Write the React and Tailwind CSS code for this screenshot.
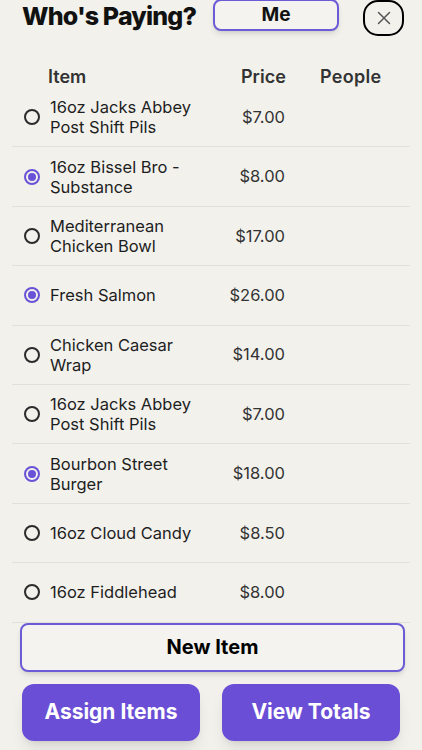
import { useState } from "react";

const items = [
  { name: ["16oz Jacks Abbey", "Post Shift Pils"], price: "$7.00", on: false },
  { name: ["16oz Bissel Bro -", "Substance"], price: "$8.00", on: true },
  { name: ["Mediterranean", "Chicken Bowl"], price: "$17.00", on: false },
  { name: ["Fresh Salmon"], price: "$26.00", on: true },
  { name: ["Chicken Caesar", "Wrap"], price: "$14.00", on: false },
  { name: ["16oz Jacks Abbey", "Post Shift Pils"], price: "$7.00", on: false },
  { name: ["Bourbon Street", "Burger"], price: "$18.00", on: true },
  { name: ["16oz Cloud Candy"], price: "$8.50", on: false },
  { name: ["16oz Fiddlehead"], price: "$8.00", on: false }
];

function Radio({ on }) {
  return (
    <div
      className={`w-4 h-4 rounded-full border-2 flex items-center justify-center shrink-0 ${
        on ? "border-[#6a52d8]" : "border-[#2b2b2b]"
      }`}
    >
      {on && <div className="w-2 h-2 rounded-full bg-[#6a52d8]" />}
    </div>
  );
}

export default function App() {
  const [rows, setRows] = useState(items);

  return (
    <div className="w-[422px] h-[750px] bg-[#f2f1ec] overflow-hidden font-['Inter',sans-serif] text-[#2b2b2b]">
      {/* top bar */}
      <div className="flex items-start h-[40px]">
        <div className="pl-[22px] w-[213px] text-[25px] leading-[32px] font-extrabold tracking-[-0.8px] text-[#111]">
          Who's Paying?
        </div>
        <button className="w-[126px] h-[32px] border-2 border-[#6b5bd6] rounded-lg bg-[#f4f3ef] shadow-md text-[19px] font-bold text-[#111] -mt-[1px]">
          Me
        </button>
        <button className="ml-[24px] w-[41px] h-[36px] border-2 border-black rounded-[15px] flex items-center justify-center text-[#555]">
          <svg width="14" height="14" viewBox="0 0 14 14" fill="none" stroke="currentColor" strokeWidth="1.5" strokeLinecap="round">
            <path d="M1.5 1.5 L12.5 12.5 M12.5 1.5 L1.5 12.5" />
          </svg>
        </button>
      </div>

      {/* column headers */}
      <div className="flex items-center h-[48px] pt-[24px] text-[18px] font-semibold text-[#333]">
        <div className="pl-[48px] w-[241px]">Item</div>
        <div className="w-[79px]">Price</div>
        <div className="tracking-[0.3px]">People</div>
      </div>

      {/* rows */}
      <div className="mx-[12px] w-[398px]">
        {rows.map((r, i) => (
          <div
            key={i}
            onClick={() => setRows(rows.map((x, j) => (j === i ? { ...x, on: !x.on } : x)))}
            className="flex items-center h-[59.4px] border-b border-[#e2e0da] pl-[12px] cursor-pointer"
          >
            <Radio on={r.on} />
            <div className="ml-[10px] w-[162px] text-[16.5px] leading-[20px] text-[#1e1e1e]">
              {r.name.map((l, k) => (
                <div key={k}>{l}</div>
              ))}
            </div>
            <div className="w-[73px] text-right text-[16.5px] text-[#333]">{r.price}</div>
          </div>
        ))}
      </div>

      {/* actions */}
      <div className="pl-[20px] pr-[17px]">
        <button className="w-full h-[49px] border-2 border-[#6b5bd6] rounded-lg bg-[#f4f3ef] shadow-md text-[20px] font-bold text-black">
          New Item
        </button>
      </div>
      <div className="flex gap-[22px] pl-[22px] pt-[12px]">
        <button className="w-[178px] h-[57px] rounded-xl bg-[#6a4fd6] shadow-lg text-white text-[21px] font-bold">
          Assign Items
        </button>
        <button className="w-[178px] h-[57px] rounded-xl bg-[#6a4fd6] shadow-lg text-white text-[21px] font-bold">
          View Totals
        </button>
      </div>
    </div>
  );
}
